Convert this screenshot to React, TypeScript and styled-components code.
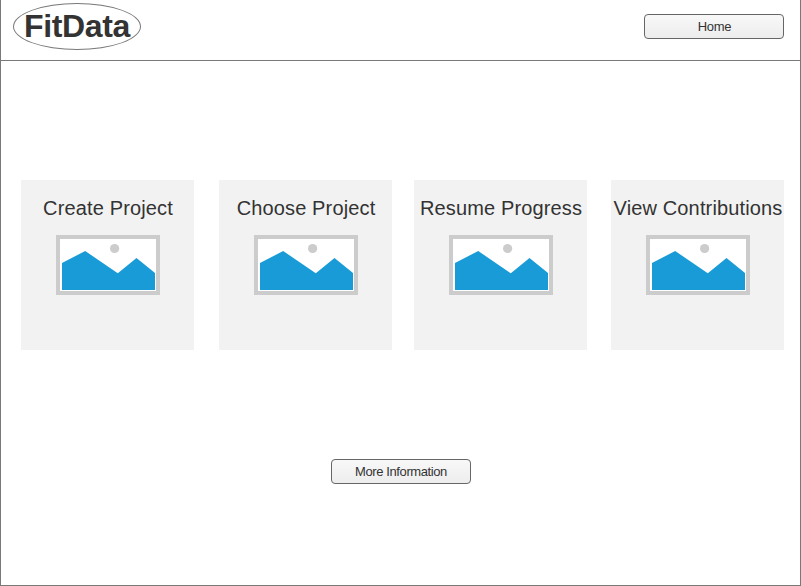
import React from 'react';
import styled, { createGlobalStyle } from 'styled-components';

const GlobalStyle = createGlobalStyle`
  *, *::before, *::after { box-sizing: border-box; }
  body { margin: 0; background: #fff; }
`;

const Page = styled.div`
  display: flex;
  flex-direction: column;
  width: 801px;
  height: 586px;
  overflow: hidden;
  border: 1px solid #797979;
  border-top: none;
  background: #fff;
  color: #333;
  font-family: 'Liberation Sans', Arial, sans-serif;
`;

const Header = styled.header`
  display: flex;
  flex: none;
  justify-content: space-between;
  align-items: flex-start;
  height: 61px;
  padding: 3px 16px 0 12px;
  border-bottom: 1px solid #797979;
`;

const Logo = styled.div`
  display: flex;
  align-items: center;
  justify-content: center;
  width: 128px;
  height: 47px;
  padding-bottom: 2px;
  border: 1px solid #797979;
  border-radius: 50%;
  font-size: 32px;
  font-weight: bold;
  line-height: 36px;
  letter-spacing: -0.35px;
`;

const Button = styled.button<{ $tracking: number }>`
  width: 140px;
  height: 25px;
  padding: 0;
  border: 1px solid #666;
  border-radius: 4px;
  background: linear-gradient(#f8f8f8, #ededed);
  color: #333;
  font: 13px/15px 'Liberation Sans', Arial, sans-serif;
  letter-spacing: ${({ $tracking }) => $tracking}px;
`;

const HomeButton = styled(Button)`
  margin-top: 11px;
  padding-left: 1px;
`;

const Main = styled.main`
  display: flex;
  flex-direction: column;
  align-items: center;
  padding-top: 119px;
`;

const Cards = styled.section`
  display: grid;
  grid-template-columns: 198px 195px 197px 173px;
  align-self: flex-start;
  margin-left: 20px;
`;

const Card = styled.article`
  display: flex;
  flex-direction: column;
  align-items: center;
  width: 173px;
  height: 170px;
  padding-top: 17px;
  background: #f2f2f2;
`;

const CardTitle = styled.h2`
  margin: 0 0 15px 1px;
  font-size: 20px;
  font-weight: normal;
  line-height: 23px;
  letter-spacing: 0.14px;
  white-space: nowrap;
`;

const Picture = styled.svg`
  display: block;
  align-self: flex-start;
  width: 104px;
  height: 60px;
  margin-left: 35px;
`;

const MoreButton = styled(Button)`
  margin-top: 109px;
  padding-left: 1px;
`;

const titles = ['Create Project', 'Choose Project', 'Resume Progress', 'View Contributions'];

function Landscape() {
  return (
    <Picture viewBox="0 0 104 60" aria-hidden="true">
      <rect x="2" y="2" width="100" height="56" fill="#fff" stroke="#ccc" strokeWidth="4" />
      <circle cx="58.6" cy="13.5" r="4.6" fill="#ccc" />
      <path d="M6 28 L29.2 16 L61.8 38.3 L80.5 23 L99 38 V55 H6 Z" fill="#199bd7" />
    </Picture>
  );
}

export default function App() {
  return (
    <>
      <GlobalStyle />
      <Page>
        <Header>
          <Logo>FitData</Logo>
          <HomeButton $tracking={-0.3}>Home</HomeButton>
        </Header>
        <Main>
          <Cards>
            {titles.map((title) => (
              <Card key={title}>
                <CardTitle>{title}</CardTitle>
                <Landscape />
              </Card>
            ))}
          </Cards>
          <MoreButton $tracking={-0.4}>More Information</MoreButton>
        </Main>
      </Page>
    </>
  );
}
